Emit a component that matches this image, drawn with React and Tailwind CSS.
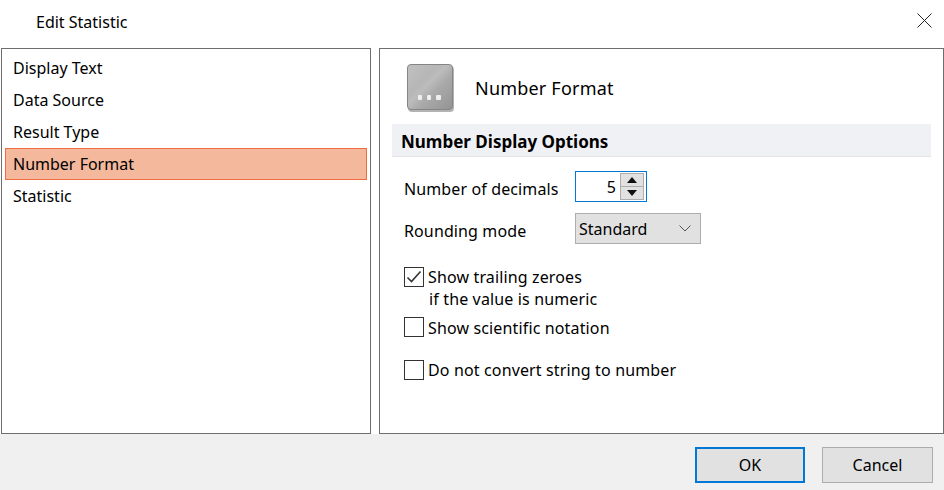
import React from 'react';

const font = 'font-["Noto_Sans","Open_Sans",sans-serif]';

const navItems = ['Display Text', 'Data Source', 'Result Type', 'Number Format', 'Statistic'];

function NumberFormatIcon() {
  return (
    <svg width="48" height="48" viewBox="0 0 48 48">
      <defs>
        <linearGradient id="keyFace" x1="0" y1="0" x2="1" y2="1">
          <stop offset="0" stopColor="#c2c2c2" />
          <stop offset="0.35" stopColor="#b6b6b6" />
          <stop offset="0.45" stopColor="#bcbcbc" />
          <stop offset="0.6" stopColor="#aaaaaa" />
          <stop offset="1" stopColor="#939393" />
        </linearGradient>
      </defs>
      <rect x="1" y="2" width="46" height="46" rx="4" fill="#808080" opacity="0.6" />
      <rect x="0.5" y="0.5" width="45" height="45" rx="3.5" fill="url(#keyFace)" stroke="#858585" />
      <rect x="11" y="31" width="4" height="5" rx="1" fill="#efefef" />
      <rect x="20" y="31" width="4" height="5" rx="1" fill="#efefef" />
      <rect x="29" y="31" width="5" height="5" rx="1" fill="#efefef" />
    </svg>
  );
}

function Checkbox({ checked, children }) {
  return (
    <div className="flex items-start">
      <span className="w-[20px] h-[20px] border border-[#333333] bg-white shrink-0 flex items-center justify-center">
        {checked && (
          <svg width="16" height="14" viewBox="0 0 16 14" fill="none">
            <path d="M1.5 7.5 L5.5 11.5 L14.5 1.5" stroke="#333333" strokeWidth="1.6" />
          </svg>
        )}
      </span>
      <span className="ml-[4px] leading-[22px] -mt-[1px] tracking-[0.14px]">{children}</span>
    </div>
  );
}

export default function App() {
  return (
    <div className={`${font} w-[944px] h-[490px] bg-white text-[16px] text-black flex flex-col overflow-hidden`}>
      {/* Title bar */}
      <div className="h-[48px] flex items-center justify-between shrink-0 pl-[36px] pr-[12px] pb-[4px]">
        <span>Edit Statistic</span>
        <svg className="-mt-[4px]" width="15" height="15" viewBox="0 0 15 15" fill="none">
          <path d="M0.5 0.5 L14.5 14.5 M14.5 0.5 L0.5 14.5" stroke="#222222" strokeWidth="1" />
        </svg>
      </div>

      <div className="h-[386px] flex pl-[1px] gap-[8px] shrink-0">
        {/* Left list */}
        <div className="w-[370px] border border-[#6e6e6e] pt-[3px] px-[3px]">
          {navItems.map((item) => (
            <div
              key={item}
              className={
                item === 'Number Format'
                  ? 'h-[32px] flex items-center pl-[7px] border border-[#ee6c3f] bg-[#f4b89d]'
                  : 'h-[32px] flex items-center pl-[8px]'
              }
            >
              {item}
            </div>
          ))}
        </div>

        {/* Right panel */}
        <div className="w-[565px] border border-[#6e6e6e] px-[12px]">
          <div className="h-[75px] flex items-center pl-[15px] pt-[3px]">
            <NumberFormatIcon />
            <span className="ml-[20px] text-[18px] tracking-[0.2px]">Number Format</span>
          </div>
          <div className="h-[33px] w-[539px] bg-[#f0f1f5] border-b border-[#e3e3e3] flex items-center pl-[9px] pt-[3px] font-bold text-[17px]">
            Number Display Options
          </div>

          <div className="pl-[12px] pt-[14px]">
            <div className="flex items-center h-[31px]">
              <span className="w-[171px] pt-[4px] tracking-[0.12px]">Number of decimals</span>
              <div className="w-[72px] h-[31px] border border-[#0078d7] flex items-center justify-end pr-[2px]">
                <span className="mr-[4px]">5</span>
                <div className="w-[24px] h-[27px] border border-[#adadad] flex flex-col">
                  <div className="flex-1 bg-[#e1e1e1] flex items-center justify-center border-b border-[#adadad]">
                    <svg width="10" height="6" viewBox="0 0 10 6"><path d="M5 0 L10 6 L0 6 Z" fill="#111111" /></svg>
                  </div>
                  <div className="flex-1 bg-[#e1e1e1] flex items-center justify-center">
                    <svg width="10" height="6" viewBox="0 0 10 6"><path d="M0 0 L10 0 L5 6 Z" fill="#111111" /></svg>
                  </div>
                </div>
              </div>
            </div>

            <div className="flex items-center h-[31px] mt-[11px]">
              <span className="w-[171px] pt-[4px] tracking-[0.12px]">Rounding mode</span>
              <div className="w-[126px] h-[31px] bg-[#e1e1e1] border border-[#adadad] flex items-center justify-between pl-[3px] pr-[9px]">
                <span>Standard</span>
                <svg width="12" height="7" viewBox="0 0 12 7" fill="none">
                  <path d="M0.5 0.5 L6 6 L11.5 0.5" stroke="#555555" strokeWidth="1" />
                </svg>
              </div>
            </div>

            <div className="mt-[23px]">
              <Checkbox checked>
                Show trailing zeroes
                <br />
                <span className="ml-[1px]">if the value is numeric</span>
              </Checkbox>
            </div>
            <div className="mt-[7px]">
              <Checkbox>
                <span className="relative top-[1px]">Show scientific notation</span>
              </Checkbox>
            </div>
            <div className="mt-[22px]">
              <Checkbox>Do not convert string to number</Checkbox>
            </div>
          </div>
        </div>
      </div>

      {/* Footer */}
      <div className="flex-1 bg-[#f0f0f0] flex justify-end items-start pt-[13px] pr-[11px] gap-[17px]">
        <button className="w-[110px] h-[36px] bg-[#e1e1e1] border-2 border-[#0078d7]">OK</button>
        <button className="w-[111px] h-[36px] bg-[#e1e1e1] border border-[#adadad]">Cancel</button>
      </div>
    </div>
  );
}
